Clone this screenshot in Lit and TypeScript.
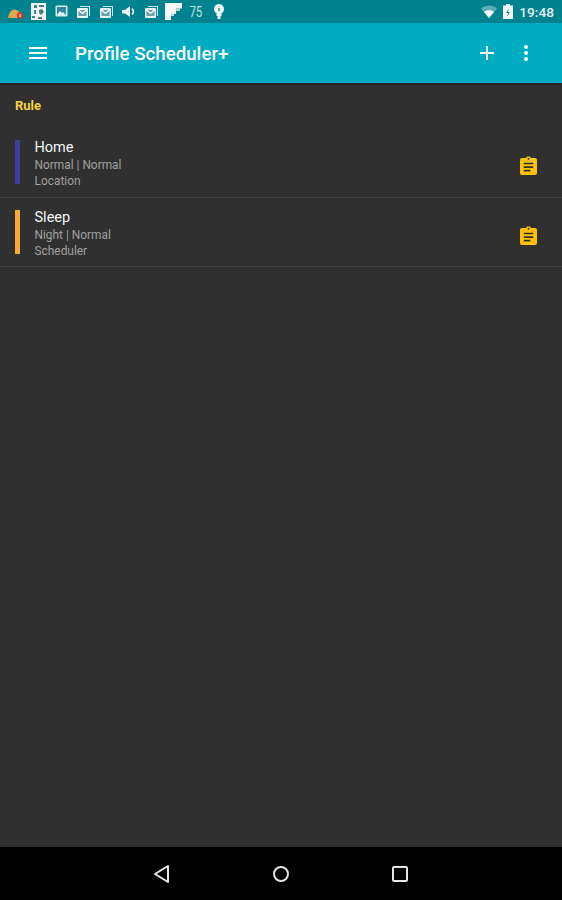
import { LitElement, css, html, svg } from "lit";
import { customElement } from "lit/decorators.js";

const mail = svg`<path d="M4 1h10v10h-1V2H4z" fill="#fff" fill-opacity=".8"/><rect x="1" y="3" width="11" height="10" rx="1" fill="#e8f4f6"/><rect x="2.500" y="5" width="8" height="6" fill="#6f9ea6"/><path d="M2.500 5l4 3.500 4-3.500" fill="none" stroke="#fff" stroke-width="1.300"/>`;

const statusIcons = [
  {
    w: 16,
    h: 18,
    icon: svg`<path d="M0 15c1-6 4-9 7-8.500 3 .5 5 3 6 5.500l-3 3z" fill="#d9a84f"/><circle cx="12" cy="12.500" r="3.200" fill="#d63b20"/><rect x="11.500" y="11" width="1" height="3" fill="#fff"/>`,
  },
  {
    w: 15,
    h: 18,
    icon: svg`<rect x="0" y="0" width="15" height="17" fill="#eef4f4"/><path d="M3 2h3v3H3zM8 2h5v2H8zM3 7h2v4H3zM8 7l3-1 2 3-3 3-2-2zM1 13h3v2H1zM7 14h4v2H7z" fill="#47808a"/>`,
  },
  {
    w: 13,
    h: 13,
    icon: svg`<rect x="0.500" y="0.500" width="12" height="11" rx="1" fill="#d8ecef"/><rect x="2" y="2" width="9" height="8" fill="#2e8a9a"/><path d="M2 10l3-4 2 2 1-1 3 3z" fill="#e8f4f6"/>`,
  },
  { w: 15, h: 14, icon: mail },
  { w: 15, h: 14, icon: mail },
  {
    w: 14,
    h: 12,
    icon: svg`<path d="M0 4h3l5-4v11l-5-3.500H0z" fill="#f0f6f7"/><path d="M10 2.500a4 4 0 0 1 0 6" fill="none" stroke="#f0f6f7" stroke-width="1.600"/>`,
  },
  { w: 15, h: 14, icon: mail },
  {
    w: 17,
    h: 17,
    icon: svg`<path d="M0 0h17v5.500h-6V11H6v6H0z" fill="#f5f8f8"/><path d="M11 5.500h4V8h-4zM6 11h3v2H6z" fill="#bcd6da"/>`,
  },
];

@customElement("app-root")
export class AppRoot extends LitElement {
  static styles = css`
    :host {
      display: flex;
      flex-direction: column;
      width: 562px;
      height: 900px;
      overflow: hidden;
      background: #303030;
      font-family: Roboto, "Liberation Sans", sans-serif;
    }

    .status {
      flex: none;
      height: 23px;
      display: flex;
      align-items: center;
      padding: 0 8px 0 5px;
      background: #00838f;
      color: #e4f1f3;
    }

    .status svg {
      display: block;
    }

    .notifications {
      display: flex;
      align-items: center;
    }

    .slot {
      width: 22.5px;
      display: flex;
      justify-content: center;
    }

    .level {
      display: inline-block;
      font-size: 14px;
      opacity: 0.85;
      transform: scaleX(0.82);
    }

    .system {
      margin-left: auto;
      display: flex;
      align-items: center;
      gap: 6px;
      font-size: 13.7px;
      font-weight: 500;
    }

    .toolbar {
      flex: none;
      height: 60px;
      display: flex;
      align-items: center;
      padding-left: 28px;
      padding-right: 34px;
      background: #00acc1;
      color: #fff;
      box-shadow: 0 1px 2px rgba(0, 0, 0, 0.5);
    }

    .title {
      margin-left: 27px;
      padding-top: 2px;
      font-size: 18.7px;
      font-weight: 500;
      flex: 1;
    }

    .actions {
      display: flex;
      align-items: center;
      gap: 30px;
    }

    .toolbar svg {
      display: block;
    }

    main {
      flex: 1;
      display: flex;
      flex-direction: column;
    }

    h2 {
      margin: 0;
      padding: 15px 15px 0;
      height: 45px;
      box-sizing: border-box;
      font-size: 13px;
      line-height: 15px;
      font-weight: 700;
      color: #f7d341;
    }

    .rule {
      height: 70px;
      box-sizing: border-box;
      display: flex;
      align-items: center;
      padding: 0 25px 2px 15px;
      border-bottom: 1px solid #424242;
    }

    .rule + .rule {
      height: 69px;
      padding-bottom: 1px;
    }

    .bar {
      width: 5px;
      height: 44px;
    }

    .text {
      flex: 1;
      margin-left: 14.5px;
      padding-top: 4px;
    }

    .name {
      font-size: 14.5px;
      line-height: 18px;
      color: #f5f5f5;
    }

    .sub {
      font-size: 11.9px;
      line-height: 16px;
      color: #a0a0a0;
    }

    .clip {
      display: block;
      margin-top: 8px;
    }

    .nav {
      flex: none;
      height: 53px;
      display: flex;
      align-items: center;
      justify-content: center;
      gap: 95px;
      background: #000;
    }

    .nav svg {
      display: block;
    }
  `;

  rules = [
    { name: "Home", sub: "Normal | Normal", type: "Location", color: "#3f3f9f" },
    { name: "Sleep", sub: "Night | Normal", type: "Scheduler", color: "#f9a83a" },
  ];

  render() {
    return html`
      <div class="status">
        <div class="notifications">
          ${statusIcons.map(
            (s) => html`<div class="slot">
              <svg width=${s.w} height=${s.h} viewBox="0 0 ${s.w} ${s.h}">${s.icon}</svg>
            </div>`,
          )}
          <div class="slot"><span class="level">75</span></div>
          <div class="slot">
            <svg width="10" height="16" viewBox="0 0 10 16">
              <path d="M5 0a5 5 0 0 1 2.500 9.300V12h-5V9.300A5 5 0 0 1 5 0z" fill="#eef5f6" />
              <rect x="4" y="4" width="2" height="3" fill="#6aa7b0" />
              <rect x="3.500" y="12" width="3" height="3" fill="#eef5f6" />
            </svg>
          </div>
        </div>
        <div class="system">
          <svg width="16" height="13" viewBox="0 0 16 13">
            <path d="M0 3.500C4.500-.5 11.500-.5 16 3.500L8 13z" fill="#fff" fill-opacity=".35" />
            <path d="M3 7c3-2.400 7-2.400 10 0l-5 6z" fill="#fff" />
          </svg>
          <svg width="10" height="15" viewBox="0 0 10 15">
            <path d="M3 0h4v1.500h3V15H0V1.500h3z" fill="#eef5f6" />
            <path d="M6 4L3 9h2l-1 4 3-5H5z" fill="#2c8b98" />
          </svg>
          <span>19:48</span>
        </div>
      </div>

      <header class="toolbar">
        <svg width="20" height="14" viewBox="0 0 20 14" fill="#fff">
          <path d="M1 1h18v2H1zM1 6h18v2H1zM1 11h18v2H1z" />
        </svg>
        <span class="title">Profile Scheduler+</span>
        <div class="actions">
          <svg width="14" height="14" viewBox="0 0 14 14" fill="#fff">
            <path d="M6.100 0h1.800v6.100H14v1.800H7.900V14H6.100V7.900H0V6.100h6.100z" />
          </svg>
          <svg width="4" height="16" viewBox="0 0 4 16" fill="#fff">
            <circle cx="2" cy="2" r="2" />
            <circle cx="2" cy="8" r="2" />
            <circle cx="2" cy="14" r="2" />
          </svg>
        </div>
      </header>

      <main>
        <h2>Rule</h2>
        ${this.rules.map(
          (r) => html`
            <div class="rule">
              <div class="bar" style="background:${r.color}"></div>
              <div class="text">
                <div class="name">${r.name}</div>
                <div class="sub">${r.sub}</div>
                <div class="sub">${r.type}</div>
              </div>
              <svg class="clip" width="17" height="19" viewBox="0 0 18 20">
                <path
                  d="M2 2h4.200a3 3 0 0 1 5.600 0H16a2 2 0 0 1 2 2v14a2 2 0 0 1-2 2H2a2 2 0 0 1-2-2V4a2 2 0 0 1 2-2z"
                  fill="#ffc107"
                />
                <circle cx="9" cy="2.800" r="1" fill="#303030" />
                <path d="M4 7h10v1.800H4zM4 10.800h10v1.800H4zM4 14.600h7v1.800H4z" fill="#303030" />
              </svg>
            </div>
          `,
        )}
      </main>

      <nav class="nav">
        <svg width="24" height="24" viewBox="0 0 24 24" fill="none" stroke="#e6e6e6" stroke-width="2">
          <path d="M18 4v16L5 12z" stroke-linejoin="round" />
        </svg>
        <svg width="24" height="24" viewBox="0 0 24 24" fill="none" stroke="#e6e6e6" stroke-width="2">
          <circle cx="12" cy="12" r="7" />
        </svg>
        <svg width="24" height="24" viewBox="0 0 24 24" fill="none" stroke="#e6e6e6" stroke-width="2">
          <rect x="5" y="5" width="14" height="14" rx="1" />
        </svg>
      </nav>
    `;
  }
}
